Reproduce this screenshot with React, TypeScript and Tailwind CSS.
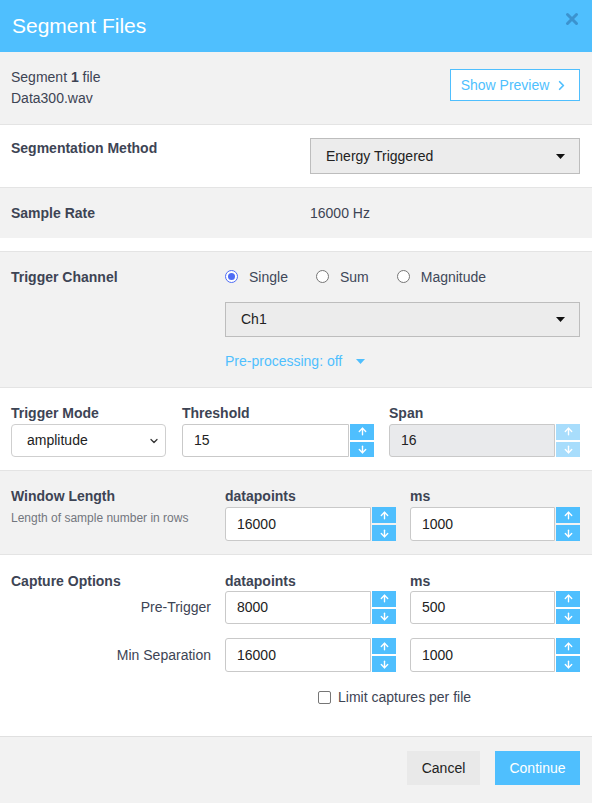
import { ArrowDown, ArrowUp, ChevronDown, ChevronRight, X } from "lucide-react";

function Caret() {
  return (
    <svg width="9" height="5" viewBox="0 0 9 5" className="shrink-0">
      <path d="M0 0h9L4.5 5z" fill="#111" />
    </svg>
  );
}

function Spinner({ disabled }: { disabled?: boolean }) {
  const bg = disabled ? "bg-[#a8ddfc]" : "bg-[#4fbffe]";
  return (
    <div className="ml-px flex w-[24px] shrink-0 flex-col gap-[2px]">
      <div className={`flex flex-1 items-center justify-center ${bg}`}>
        <ArrowUp size={11} strokeWidth={3} color="#fff" />
      </div>
      <div className={`flex flex-1 items-center justify-center ${bg}`}>
        <ArrowDown size={11} strokeWidth={3} color="#fff" />
      </div>
    </div>
  );
}

function NumberField({
  value,
  disabled,
  h = "h-[33px]",
}: {
  value: string;
  disabled?: boolean;
  h?: string;
}) {
  return (
    <div className={`flex ${h}`}>
      <div
        className={`flex flex-1 items-center rounded-l-[3px] border border-[#c9c9c9] pl-[11px] text-[14px] text-[#222] ${
          disabled ? "bg-[#e9eaec]" : "bg-white"
        }`}
      >
        {value}
      </div>
      <Spinner disabled={disabled} />
    </div>
  );
}

function Radio({ checked, label }: { checked?: boolean; label: string }) {
  return (
    <div className="flex items-center">
      {checked ? (
        <span className="flex h-[13px] w-[13px] items-center justify-center rounded-full border-[1.5px] border-[#4e6cf5] bg-white">
          <span className="h-[7px] w-[7px] rounded-full bg-[#4e6cf5]" />
        </span>
      ) : (
        <span className="h-[13px] w-[13px] rounded-full border border-[#767676] bg-white" />
      )}
      <span className="ml-[11px] mt-[2px] text-[14px] text-[#404859]">{label}</span>
    </div>
  );
}

export default function App() {
  return (
    <div className="flex min-h-[803px] w-[592px] flex-col bg-white font-['Liberation_Sans',Arial,sans-serif] text-[#3d4454]">
      {/* header */}
      <div className="flex h-[52px] items-center justify-between bg-[#4fbffe] pl-[12px] pr-[11px]">
        <h1 className="text-[21px] text-white">Segment Files</h1>
        <X size={18} strokeWidth={4} color="#3b93cf" className="-mt-[14px]" />
      </div>

      {/* file */}
      <div className="flex h-[73px] justify-between border-b border-[#e4e4e4] bg-[#f2f2f2] px-[11px] pr-[12px]">
        <div className="self-center text-[14px] leading-[21px]">
          <div>
            Segment <span className="font-bold">1</span> file
          </div>
          <div>Data300.wav</div>
        </div>
        <button className="mt-[17px] flex h-[32px] w-[130px] items-center justify-center gap-[5px] border border-[#4fbffe] bg-white text-[14px] text-[#4fbffe]">
          Show Preview
          <ChevronRight size={15} strokeWidth={2.75} />
        </button>
      </div>

      {/* segmentation method */}
      <div className="flex border-b border-[#e4e4e4] bg-white px-[11px] pb-[13px] pt-[13px] pr-[12px]">
        <div className="w-[299px] text-[14px] font-bold leading-[20px]">Segmentation Method</div>
        <div className="flex h-[36px] flex-1 items-center justify-between border border-[#bdbdbd] bg-[#ececec] pl-[15px] pr-[14px] text-[14px] text-[#222]">
          Energy Triggered
          <Caret />
        </div>
      </div>

      {/* sample rate */}
      <div className="flex h-[50px] items-center bg-[#f2f2f2] px-[11px]">
        <div className="w-[299px] text-[14px] font-bold">Sample Rate</div>
        <div className="text-[14px]">16000 Hz</div>
      </div>

      <div className="h-[14px] border-b border-[#e4e4e4] bg-white" />

      {/* trigger channel */}
      <div className="flex border-b border-[#e4e4e4] bg-[#f2f2f2] px-[11px] pb-[16px] pr-[12px] pt-[14px]">
        <div className="mt-px w-[214px] text-[14px] font-bold leading-[20px]">Trigger Channel</div>
        <div className="flex flex-1 flex-col">
          <div className="flex h-[20px] items-center gap-[28px]">
            <Radio checked label="Single" />
            <Radio label="Sum" />
            <Radio label="Magnitude" />
          </div>
          <div className="mt-[16px] flex h-[35px] items-center justify-between border border-[#bdbdbd] bg-[#ececec] pl-[15px] pr-[14px] text-[14px] text-[#222]">
            Ch1
            <Caret />
          </div>
          <div className="mt-[14px] flex h-[20px] items-center gap-[14px] text-[14px] text-[#4fbffe]">
            Pre-processing: off
            <svg width="9" height="5" viewBox="0 0 9 5">
              <path d="M0 0h9L4.5 5z" fill="#4fbffe" />
            </svg>
          </div>
        </div>
      </div>

      {/* trigger mode */}
      <div className="flex gap-[16px] border-b border-[#e4e4e4] bg-white px-[11px] pb-[13px] pr-[12px] pt-[17px]">
        <div className="w-[155px]">
          <div className="mb-[3px] text-[14px] font-bold leading-[16px]">Trigger Mode</div>
          <div className="flex h-[33px] items-center justify-between rounded-[4px] border border-[#cfcfcf] bg-white pl-[15px] pr-[5px] text-[14px] text-[#222]">
            amplitude
            <ChevronDown size={12} strokeWidth={2.5} color="#333" />
          </div>
        </div>
        <div className="w-[192px]">
          <div className="mb-[3px] text-[14px] font-bold leading-[16px]">Threshold</div>
          <NumberField value="15" />
        </div>
        <div className="ml-[-1px] flex-1">
          <div className="mb-[3px] text-[14px] font-bold leading-[16px]">Span</div>
          <NumberField value="16" disabled />
        </div>
      </div>

      {/* window length */}
      <div className="flex border-b border-[#e4e4e4] bg-[#f2f2f2] px-[11px] pb-[13px] pr-[12px] pt-[17px]">
        <div className="w-[214px]">
          <div className="text-[14px] font-bold leading-[16px]">Window Length</div>
          <div className="mt-[5px] text-[12px] text-[#72767e]">Length of sample number in rows</div>
        </div>
        <div className="w-[171px]">
          <div className="mb-[3px] text-[14px] font-bold leading-[16px]">datapoints</div>
          <NumberField value="16000" h="h-[34px]" />
        </div>
        <div className="ml-[14px] flex-1">
          <div className="mb-[3px] text-[14px] font-bold leading-[16px]">ms</div>
          <NumberField value="1000" h="h-[34px]" />
        </div>
      </div>

      {/* capture options */}
      <div className="flex h-[182px] flex-col border-b border-[#e0e0e0] bg-white px-[11px] pr-[12px] pt-[18px]">
        <div className="flex text-[14px] font-bold leading-[16px]">
          <div className="w-[214px]">Capture Options</div>
          <div className="w-[185px]">datapoints</div>
          <div>ms</div>
        </div>
        <div className="mt-[2px] flex items-center">
          <div className="w-[200px] text-right text-[14px]">Pre-Trigger</div>
          <div className="ml-[14px] w-[171px]">
            <NumberField value="8000" />
          </div>
          <div className="ml-[14px] flex-1">
            <NumberField value="500" />
          </div>
        </div>
        <div className="mt-[14px] flex items-center">
          <div className="w-[200px] text-right text-[14px]">Min Separation</div>
          <div className="ml-[14px] w-[171px]">
            <NumberField value="16000" h="h-[34px]" />
          </div>
          <div className="ml-[14px] flex-1">
            <NumberField value="1000" h="h-[34px]" />
          </div>
        </div>
        <div className="mt-[15px] flex items-center pl-[307px]">
          <span className="h-[13px] w-[13px] rounded-[2px] border border-[#767676] bg-white" />
          <span className="ml-[7px] text-[14px]">Limit captures per file</span>
        </div>
      </div>

      {/* footer */}
      <div className="flex flex-1 items-start justify-end gap-[15px] bg-[#f2f2f2] pr-[12px] pt-[14px]">
        <button className="h-[34px] w-[73px] bg-[#e9e9e9] text-[14px] text-[#222]">Cancel</button>
        <button className="h-[34px] w-[85px] bg-[#4fbffe] text-[14px] text-white">Continue</button>
      </div>
    </div>
  );
}
